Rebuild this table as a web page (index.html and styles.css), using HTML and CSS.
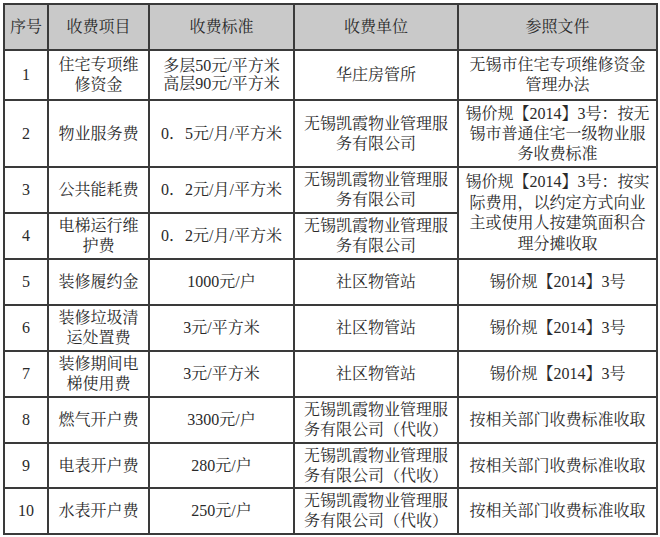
FILE: index.html
```html
<!DOCTYPE html>
<html lang="zh-CN">
<head>
<meta charset="utf-8">
<title>收费标准</title>
<link rel="stylesheet" href="styles.css">
</head>
<body>
<table class="fees">
  <colgroup>
    <col class="c-no">
    <col class="c-item">
    <col class="c-std">
    <col class="c-unit">
    <col class="c-doc">
  </colgroup>
  <thead>
    <tr class="h46 head">
      <th>序号</th><th>收费项目</th><th>收费标准</th><th>收费单位</th><th>参照文件</th>
    </tr>
  </thead>
  <tbody>
    <tr class="h50">
      <td class="num">1</td>
      <td>住宅专项维<br>修资金</td>
      <td class="tight">多层50元/平方米<br>高层90元/平方米</td>
      <td>华庄房管所</td>
      <td>无锡市住宅专项维修资金<br>管理办法</td>
    </tr>
    <tr class="h67">
      <td class="num">2</td>
      <td>物业服务费</td>
      <td>0．5元/月/平方米</td>
      <td>无锡凯霞物业管理服<br>务有限公司</td>
      <td>锡价规【2014】3号：按无<br>锡市普通住宅一级物业服<br>务收费标准</td>
    </tr>
    <tr class="h46">
      <td class="num">3</td>
      <td>公共能耗费</td>
      <td>0．2元/月/平方米</td>
      <td>无锡凯霞物业管理服<br>务有限公司</td>
      <td rowspan="2" class="wide">锡价规【2014】3号：按实<br>际费用，以约定方式向业<br>主或使用人按建筑面积合<br>理分摊收取</td>
    </tr>
    <tr class="h46">
      <td class="num">4</td>
      <td>电梯运行维<br>护费</td>
      <td>0．2元/月/平方米</td>
      <td>无锡凯霞物业管理服<br>务有限公司</td>
    </tr>
    <tr class="h46">
      <td class="num">5</td>
      <td>装修履约金</td>
      <td>1000元/户</td>
      <td>社区物管站</td>
      <td>锡价规【2014】3号</td>
    </tr>
    <tr class="h46">
      <td class="num">6</td>
      <td>装修垃圾清<br>运处置费</td>
      <td>3元/平方米</td>
      <td>社区物管站</td>
      <td>锡价规【2014】3号</td>
    </tr>
    <tr class="h46">
      <td class="num">7</td>
      <td>装修期间电<br>梯使用费</td>
      <td>3元/平方米</td>
      <td>社区物管站</td>
      <td>锡价规【2014】3号</td>
    </tr>
    <tr class="h46">
      <td class="num">8</td>
      <td>燃气开户费</td>
      <td>3300元/户</td>
      <td>无锡凯霞物业管理服<br>务有限公司（代收）</td>
      <td>按相关部门收费标准收取</td>
    </tr>
    <tr class="h45">
      <td class="num">9</td>
      <td>电表开户费</td>
      <td>280元/户</td>
      <td>无锡凯霞物业管理服<br>务有限公司（代收）</td>
      <td>按相关部门收费标准收取</td>
    </tr>
    <tr class="h46">
      <td class="num">10</td>
      <td>水表开户费</td>
      <td>250元/户</td>
      <td>无锡凯霞物业管理服<br>务有限公司（代收）</td>
      <td>按相关部门收费标准收取</td>
    </tr>
  </tbody>
</table>
</body>
</html>
```
FILE: styles.css
```css
html, body {
  margin: 0;
  padding: 0;
  background: #ffffff;
}
body {
  padding: 3px 0 0 3px;
  font-family: "Liberation Serif", "Noto Serif CJK SC", "Noto Sans CJK SC", serif;
  color: #2a2a2a;
}
.fees {
  border-collapse: collapse;
  table-layout: fixed;
  width: 655px;
  font-size: 16px;
  line-height: 20px;
}
.c-no { width: 44px; }
.c-item { width: 101px; }
.c-std { width: 145px; }
.c-unit { width: 164px; }
.c-doc { width: 199px; }
.fees th, .fees td {
  border: 2px solid #3a3a3a;
  padding: 0 2px;
  text-align: center;
  vertical-align: middle;
  font-weight: normal;
  white-space: nowrap;
  overflow: hidden;
}
.head th {
  background: #c9c9c9;
}
.fees td.tight { line-height: 18px; }
.fees td.wide { line-height: 20.5px; }
.h45 { height: 45px; }
.h46 { height: 46px; }
.h50 { height: 50px; }
.h67 { height: 67px; }
```
